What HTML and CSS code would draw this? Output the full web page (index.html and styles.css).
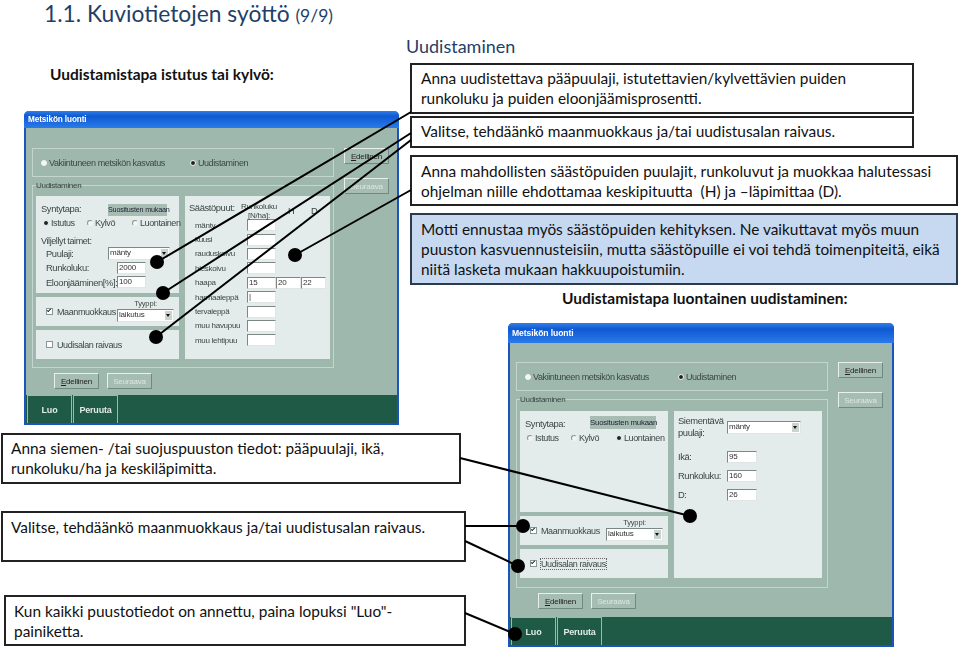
FILE: index.html
```html
<!DOCTYPE html>
<html lang="fi">
<head>
    <meta charset="UTF-8">
    <meta name="viewport" content="width=device-width, initial-scale=1.0">
    <title>Kuviotietojen syöttö</title>
    <link rel="stylesheet" href="styles.css">
</head>
<body>
<div class="slide">
    <h1 class="slide-title">1.1. Kuviotietojen syöttö <small>(9/9)</small></h1>
    <h2 class="side-title">Uudistaminen</h2>
    <p class="sub sub-left">Uudistamistapa istutus tai kylvö:</p>
    <p class="sub sub-right">Uudistamistapa luontainen uudistaminen:</p>

    <!-- window 1: istutus -->
    <div class="window win-a">
        <div class="win-title">Metsikön luonti</div>
        <div class="win-body">
            <div class="win-main">
                <div class="group top-group">
                    <span class="opt"><i class="radio blank"></i>Vakiintuneen metsikön kasvatus</span>
                    <span class="opt"><i class="radio on"></i>Uudistaminen</span>
                </div>
                <div class="group main-group">
                    <span class="group-label">Uudistaminen</span>
                    <div class="panels">
                        <div class="left-col">
                            <div class="panel panel-big">
                                <div class="row-between">
                                    <span>Syntytapa:</span>
                                    <span class="flat-btn">Suositusten mukaan</span>
                                </div>
                                <div class="radio-row">
                                    <span class="opt"><i class="radio on"></i>Istutus</span>
                                    <span class="opt"><i class="radio"></i>Kylvö</span>
                                    <span class="opt"><i class="radio"></i>Luontainen</span>
                                </div>
                                <div class="taimet-label">Viljellyt taimet:</div>
                                <div class="form-row">
                                    <span class="form-label">Puulaji:</span>
                                    <span class="select sel-wide">mänty<b class="arrow"></b></span>
                                </div>
                                <div class="form-row">
                                    <span class="form-label">Runkoluku:</span>
                                    <span class="field fld-push">2000</span>
                                </div>
                                <div class="form-row">
                                    <span class="form-label">Eloonjääminen[%]:</span>
                                    <span class="field fld-push">100</span>
                                </div>
                            </div>
                            <div class="panel panel-small">
                                <span class="opt"><i class="check on"></i>Maanmuokkaus</span>
                                <div class="tyyppi">
                                    <span>Tyyppi:</span>
                                    <span class="select sel-narrow">laikutus<b class="arrow"></b></span>
                                </div>
                            </div>
                            <div class="panel panel-small">
                                <span class="opt"><i class="check"></i>Uudisalan raivaus</span>
                            </div>
                        </div>
                        <div class="panel panel-trees">
                            <div class="trees-head">
                                <span>Säästöpuut:</span>
                                <span class="trees-n">Runkoluku<br>[N/ha]:</span>
                                <span class="trees-h">H</span>
                                <span class="trees-d">D</span>
                            </div>
                            <div class="tree-grid">
                                <span>mänty</span><span class="field"></span>
                                <span>kuusi</span><span class="field"></span>
                                <span>rauduskoivu</span><span class="field"></span>
                                <span>hieskoivu</span><span class="field"></span>
                                <span>haapa</span><span class="field">15</span><span class="field">20</span><span class="field">22</span>
                                <span>harmaaleppä</span><span class="field">|</span>
                                <span>tervaleppä</span><span class="field"></span>
                                <span>muu havupuu</span><span class="field"></span>
                                <span>muu lehtipuu</span><span class="field"></span>
                            </div>
                        </div>
                    </div>
                </div>
                <div class="nav-row">
                    <span class="btn"><u>E</u>dellinen</span>
                    <span class="btn off">Seuraava</span>
                </div>
            </div>
            <div class="win-side">
                <span class="btn"><u>E</u>dellinen</span>
                <span class="btn off">Seuraava</span>
            </div>
        </div>
        <div class="win-tabs">
            <span class="tab">Luo</span>
            <span class="tab">Peruuta</span>
        </div>
    </div>

    <!-- window 2: luontainen -->
    <div class="window win-b">
        <div class="win-title">Metsikön luonti</div>
        <div class="win-body">
            <div class="win-main">
                <div class="group top-group">
                    <span class="opt"><i class="radio blank"></i>Vakiintuneen metsikön kasvatus</span>
                    <span class="opt"><i class="radio on"></i>Uudistaminen</span>
                </div>
                <div class="group main-group">
                    <span class="group-label">Uudistaminen</span>
                    <div class="panels">
                        <div class="left-col">
                            <div class="panel panel-big">
                                <div class="row-between">
                                    <span>Syntytapa:</span>
                                    <span class="flat-btn">Suositusten mukaan</span>
                                </div>
                                <div class="radio-row">
                                    <span class="opt"><i class="radio"></i>Istutus</span>
                                    <span class="opt"><i class="radio"></i>Kylvö</span>
                                    <span class="opt"><i class="radio on"></i>Luontainen</span>
                                </div>
                            </div>
                            <div class="panel panel-small">
                                <span class="opt"><i class="check on"></i>Maanmuokkaus</span>
                                <div class="tyyppi">
                                    <span>Tyyppi:</span>
                                    <span class="select sel-narrow">laikutus<b class="arrow"></b></span>
                                </div>
                            </div>
                            <div class="panel panel-small">
                                <span class="opt"><i class="check on"></i><span class="focused">Uudisalan raivaus</span></span>
                            </div>
                        </div>
                        <div class="panel panel-seed">
                            <div class="seed-row seed-first">
                                <span>Siementävä<br>puulaji:</span>
                                <span class="select sel-seed">mänty<b class="arrow"></b></span>
                            </div>
                            <div class="seed-row"><span>Ikä:</span><span class="field">95</span></div>
                            <div class="seed-row"><span>Runkoluku:</span><span class="field">160</span></div>
                            <div class="seed-row"><span>D:</span><span class="field">26</span></div>
                        </div>
                    </div>
                </div>
                <div class="nav-row">
                    <span class="btn"><u>E</u>dellinen</span>
                    <span class="btn off">Seuraava</span>
                </div>
            </div>
            <div class="win-side">
                <span class="btn"><u>E</u>dellinen</span>
                <span class="btn off">Seuraava</span>
            </div>
        </div>
        <div class="win-tabs">
            <span class="tab">Luo</span>
            <span class="tab">Peruuta</span>
        </div>
    </div>

    <!-- callouts -->
    <div class="callout c1">Anna uudistettava pääpuulaji, istutettavien/kylvettävien puiden<br>runkoluku ja puiden eloonjäämisprosentti.</div>
    <div class="callout c2">Valitse, tehdäänkö maanmuokkaus ja/tai uudistusalan raivaus.</div>
    <div class="callout c3">Anna mahdollisten säästöpuiden puulajit, runkoluvut ja muokkaa halutessasi<br>ohjelman niille ehdottamaa keskipituutta&nbsp; (H) ja –läpimittaa (D).</div>
    <div class="callout c4 blue">Motti ennustaa myös säästöpuiden kehityksen. Ne vaikuttavat myös muun<br>puuston kasvuennusteisiin, mutta säästöpuille ei voi tehdä toimenpiteitä, eikä<br>niitä lasketa mukaan hakkuupoistumiin.</div>
    <div class="callout c5">Anna siemen- /tai suojuspuuston tiedot: pääpuulaji, ikä,<br>runkoluku/ha ja keskiläpimitta.</div>
    <div class="callout c6">Valitse, tehdäänkö maanmuokkaus ja/tai uudistusalan raivaus.</div>
    <div class="callout c7">Kun kaikki puustotiedot on annettu, paina lopuksi "Luo"-<br>painiketta.</div>

    <!-- connector lines and dots -->
    <svg class="pointers" width="960" height="651" viewBox="0 0 960 651">
        <g stroke="#000" stroke-width="2">
            <line x1="157" y1="262" x2="411" y2="112"/>
            <line x1="163" y1="293" x2="411" y2="133"/>
            <line x1="156" y1="337" x2="411" y2="140"/>
            <line x1="295" y1="255" x2="411" y2="190"/>
            <line x1="460" y1="458" x2="690" y2="516"/>
            <line x1="465" y1="526" x2="523" y2="526"/>
            <line x1="465" y1="541" x2="518" y2="566"/>
            <line x1="465" y1="613" x2="515" y2="634"/>
        </g>
        <circle cx="157" cy="262" r="7"/>
        <circle cx="163" cy="293" r="7"/>
        <circle cx="156" cy="337" r="7"/>
        <circle cx="295" cy="255" r="7"/>
        <circle cx="690" cy="516" r="7"/>
        <circle cx="523" cy="526" r="7"/>
        <circle cx="518" cy="566" r="7"/>
        <circle cx="515" cy="634" r="7"/>
    </svg>
</div>
</body>
</html>
```
FILE: styles.css
```css
body {
    margin: 0;
    background: #fff;
    font-family: Lato, "Open Sans", sans-serif;
    color: #111;
}
.slide {
    position: relative;
    width: 960px;
    height: 651px;
    overflow: hidden;
}

/* headings */
.slide-title {
    position: absolute;
    left: 44px;
    top: -1px;
    margin: 0;
    font-size: 22.8px;
    line-height: 28px;
    font-weight: 400;
    color: #1f3f68;
}
.slide-title small {
    font-size: 17.5px;
}
.side-title {
    position: absolute;
    left: 406px;
    top: 36px;
    margin: 0;
    font-size: 18px;
    line-height: 20px;
    font-weight: 400;
    color: #1f3f68;
}
.sub {
    position: absolute;
    margin: 0;
    font-size: 15.5px;
    line-height: 20px;
    font-weight: 700;
}
.sub-left {
    left: 50px;
    top: 64px;
}
.sub-right {
    left: 562px;
    top: 288px;
}

/* callouts */
.callout {
    position: absolute;
    box-sizing: border-box;
    background: #fff;
    border: 2px solid #222;
    font-size: 15.4px;
    line-height: 20px;
    padding: 3px 8px;
    white-space: nowrap;
}
.callout.blue {
    background: #c6d9f1;
    border-color: #2b3a4e;
    line-height: 19.8px;
    padding-top: 5px;
}
.c1 { left: 410px; top: 63px; width: 504px; height: 51px; padding-left: 9px; }
.c2 { left: 410px; top: 116px; width: 504px; height: 32px; padding-left: 9px; }
.c3 { left: 410px; top: 155px; width: 548px; height: 51px; padding-left: 9px; padding-top: 4px; }
.c4 { left: 410px; top: 213px; width: 548px; height: 72px; padding-left: 9px; }
.c5 { left: 1px; top: 433px; width: 460px; height: 51px; }
.c6 { left: 1px; top: 511px; width: 465px; height: 51px; padding-top: 4px; }
.c7 { left: 4px; top: 595px; width: 462px; height: 51px; padding-top: 4px; }

.pointers {
    position: absolute;
    left: 0;
    top: 0;
}

/* program windows */
.window {
    position: absolute;
    box-sizing: border-box;
    display: flex;
    flex-direction: column;
    border: 2px solid #1c54bf;
    border-top: none;
    border-radius: 5px 5px 0 0;
    background: #9fb8ae;
    font-family: "Liberation Sans", Arial, sans-serif;
    font-size: 9px;
    letter-spacing: -0.4px;
    color: #3c4744;
    filter: blur(0.35px);
}
.win-a { left: 24px; top: 111px; width: 375px; height: 314px; }
.win-b { left: 508px; top: 323px; width: 386px; height: 324px; }
.win-title {
    margin: 0 -2px;
    height: 17px;
    padding: 4px 0 0 4px;
    box-sizing: border-box;
    border-radius: 5px 5px 0 0;
    background: linear-gradient(#2f7fe8, #0f58d2 30%, #2a7bea);
    color: #fff;
    font-size: 8.2px;
    letter-spacing: -0.1px;
    font-weight: 700;
}
.win-b .win-title {
    height: 20px;
    padding-top: 5px;
    font-size: 8.6px;
}
.win-body {
    flex: 1;
    display: flex;
    padding: 20px 0 0 6px;
}
.win-b .win-body {
    padding-top: 19px;
}
.win-main {
    width: 302px;
    display: flex;
    flex-direction: column;
}
.win-b .win-main {
    width: 312px;
}
.win-side {
    margin-left: 10px;
    display: flex;
    flex-direction: column;
    gap: 14px;
}
.group {
    box-sizing: border-box;
    border: 1px solid #c4d4ce;
}
.top-group {
    height: 29px;
    display: flex;
    align-items: center;
    gap: 25px;
    padding-left: 8px;
}
.win-b .top-group {
    gap: 29px;
}
.main-group {
    margin-top: 8px;
    height: 183px;
    padding: 0 3px;
}
.win-b .main-group {
    height: 189px;
}
.group-label {
    display: block;
    width: max-content;
    margin: -6px 0 5px 0;
    height: 11px;
    line-height: 11px;
    background: #9fb8ae;
    font-size: 8px;
    letter-spacing: -0.3px;
}
.win-b .group-label {
    margin-bottom: 6px;
}
.panels {
    display: flex;
    gap: 6px;
    height: 163px;
}
.win-b .panels {
    height: 167px;
}
.left-col {
    width: 143px;
    display: flex;
    flex-direction: column;
    gap: 4px;
}
.win-b .left-col {
    width: 148px;
}
.panel {
    box-sizing: border-box;
    background: #e3ecea;
}
.panel-big {
    flex: 1;
    padding: 7px 4px 0 5px;
}
.panel-small {
    height: 29px;
    display: flex;
    align-items: center;
    justify-content: space-between;
    padding: 0 5px 0 10px;
}
.row-between {
    display: flex;
    justify-content: space-between;
    align-items: flex-start;
    font-size: 9.4px;
    height: 14px;
    padding-right: 8px;
}
.flat-btn {
    box-sizing: border-box;
    width: 59px;
    height: 12px;
    line-height: 12px;
    margin-top: 1px;
    text-align: center;
    background: #a7bdb4;
    font-size: 7.2px;
    letter-spacing: -0.2px;
    color: #223;
    white-space: nowrap;
}
.win-b .flat-btn {
    width: 66px;
    height: 13px;
    line-height: 13px;
    margin-top: -2px;
    font-size: 7.8px;
}
.radio-row {
    display: grid;
    grid-template-columns: 44px 45px auto;
    padding-left: 2px;
    margin-top: 1px;
}
.opt {
    display: inline-flex;
    align-items: center;
    gap: 2px;
    white-space: nowrap;
}
.radio {
    box-sizing: border-box;
    width: 6px;
    height: 6px;
    border-radius: 50%;
    background: #f4f6f5;
    border: 1px solid;
    border-color: #8b9692 #eef2f0 #eef2f0 #8b9692;
}
.radio.blank {
    border-color: #f4f6f5;
}
.radio.on {
    background: #222;
    border-color: #f4f6f5;
}
.check {
    box-sizing: border-box;
    width: 7px;
    height: 7px;
    margin-right: 2px;
    background: #fff;
    border: 1px solid #8b9692;
    position: relative;
}
.check.on::after {
    content: "";
    position: absolute;
    left: 1px;
    top: -1px;
    width: 1px;
    height: 3px;
    border: solid #222;
    border-width: 0 1.5px 1.5px 0;
    transform: rotate(45deg);
}
.focused {
    outline: 1px dotted #666;
}
.taimet-label {
    margin-top: 8px;
}
.form-row {
    display: flex;
    align-items: center;
    height: 14.5px;
    padding-left: 5px;
    font-size: 9.4px;
}
.form-label {
    width: 71px;
    white-space: nowrap;
}
.field, .select {
    box-sizing: border-box;
    background: #fff;
    border: 1px solid #dfe6e3;
    border-top-color: #7d8885;
    border-left-color: #7d8885;
    font-size: 8px;
    letter-spacing: -0.2px;
    line-height: 10px;
    height: 12px;
    padding-left: 1px;
    color: #333;
}
.fld-push { width: 29px; }
.select {
    display: flex;
    align-items: center;
    justify-content: space-between;
    height: 13px;
}
.arrow {
    width: 7px;
    height: 9px;
    background: #c9d4cf;
    position: relative;
    margin-right: 1px;
}
.arrow::after {
    content: "";
    position: absolute;
    left: 1px;
    top: 3px;
    border: 2.5px solid transparent;
    border-top: 3px solid #111;
    border-bottom: none;
}
.sel-wide { width: 62px; margin-left: -9px; }
.sel-narrow { width: 57px; }
.sel-seed { width: 74px; }
.tyyppi {
    display: flex;
    flex-direction: column;
    align-items: center;
    gap: 1px;
    font-size: 7.6px;
    letter-spacing: -0.2px;
    padding-bottom: 3px;
}

/* saastopuut */
.panel-trees {
    width: 145px;
    padding: 6px 4px 0 4px;
}
.trees-head {
    position: relative;
    height: 16px;
    font-size: 9.4px;
}
.trees-n {
    position: absolute;
    left: 48px;
    top: 0;
    width: 44px;
    text-align: center;
    font-size: 8px;
    letter-spacing: -0.2px;
    line-height: 9px;
}
.trees-h {
    position: absolute;
    left: 99px;
    top: 3px;
}
.trees-d {
    position: absolute;
    left: 122px;
    top: 3px;
}
.tree-grid {
    display: grid;
    grid-template-columns: 58px 29px 25px 25px;
    grid-auto-rows: 14.4px;
    align-items: center;
    font-size: 8px;
    letter-spacing: -0.3px;
}
.tree-grid span:not(.field) {
    grid-column: 1;
    padding-left: 6px;
    white-space: nowrap;
}
.panel-seed {
    width: 148px;
    padding: 3px 4px 0 4px;
    font-size: 9.4px;
}
.seed-row {
    display: grid;
    grid-template-columns: 49px 30px;
    align-items: center;
    height: 19px;
}
.seed-first {
    grid-template-columns: 49px 74px;
    height: 26px;
    margin-bottom: 7px;
    line-height: 12px;
}

/* buttons */
.btn {
    box-sizing: border-box;
    width: 45px;
    height: 16px;
    display: flex;
    align-items: center;
    justify-content: center;
    background: #a6bdb4;
    border: 1px solid #6f8a80;
    border-top-color: #e8efec;
    border-left-color: #e8efec;
    font-size: 8px;
    letter-spacing: -0.2px;
    color: #222;
}
.btn.off {
    color: #dde6e2;
}
.nav-row {
    display: flex;
    gap: 8px;
    margin: 5px 0 0 22px;
}
.win-tabs {
    height: 28px;
    display: flex;
    gap: 1px;
    padding-left: 1px;
    background: #1e5a46;
}
.tab {
    box-sizing: border-box;
    width: 45px;
    display: flex;
    align-items: center;
    justify-content: center;
    border: 1px solid #9fb8ae;
    border-bottom: none;
    color: #dfeae5;
    font-size: 9px;
    letter-spacing: -0.2px;
    font-weight: 700;
}
```
